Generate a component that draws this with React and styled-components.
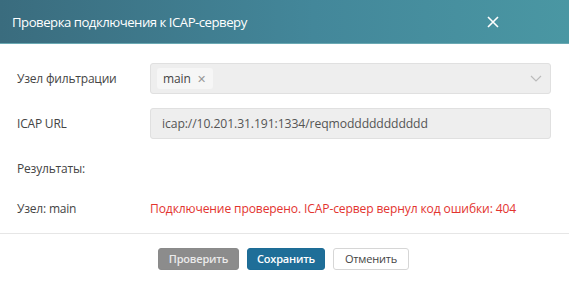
import React from "react";
import styled, { createGlobalStyle } from "styled-components";

const GlobalStyle = createGlobalStyle`
  html, body {
    margin: 0;
    padding: 0;
    background: #fff;
  }
  body {
    font-family: "Open Sans", "Noto Sans", sans-serif;
    color: #444;
  }
`;

const Dialog = styled.div`
  width: 569px;
  height: 283px;
  background: #fff;
  display: flex;
  flex-direction: column;
  overflow: hidden;
`;

const Header = styled.div`
  height: 44px;
  flex: none;
  display: flex;
  align-items: center;
  justify-content: space-between;
  padding: 0 12px 0 12px;
  background: linear-gradient(90deg, #3a6c7e 0%, #43879a 55%, #4a97a3 100%);
  border-bottom: 1px solid #6aa9b3;
  box-sizing: border-box;
`;

const Title = styled.div`
  color: #fff;
  font-size: 13.2px;
  letter-spacing: -0.5px;
`;

const Close = styled.div`
  width: 24px;
  display: flex;
  justify-content: center;
  margin-right: 52px;
`;

const Body = styled.div`
  flex: 1;
  padding: 19px 18px 0 17px;
  display: flex;
  flex-direction: column;
`;

const Row = styled.div`
  display: flex;
  align-items: center;
  height: ${(p) => p.h || 31}px;
  margin-bottom: ${(p) => p.mb || 0}px;
`;

const Label = styled.div`
  width: 133px;
  flex: none;
  font-size: 12px;
  color: #444;
  letter-spacing: -0.2px;
`;

const Field = styled.div`
  flex: 1;
  height: 31px;
  box-sizing: border-box;
  background: #eeeeee;
  border: 1px solid #e0e0e0;
  border-radius: 3px;
  display: flex;
  align-items: center;
  padding: 0 ${(p) => (p.select ? 6 : 11)}px;
  font-size: 12.2px;
  color: #555;
  letter-spacing: -0.1px;
`;

const Tag = styled.div`
  height: 21px;
  box-sizing: border-box;
  background: #f6f6f6;
  border-radius: 3px;
  padding: 0 7px 0 6px;
  display: flex;
  align-items: center;
  gap: 6px;
  font-size: 12px;
  color: #444;
`;

const TagX = styled.span`
  color: #999;
  font-size: 11px;
`;

const Chevron = styled.div`
  margin-left: auto;
  margin-right: 2px;
  display: flex;
`;

const ErrorText = styled.div`
  font-size: 12.1px;
  color: #e3342f;
  letter-spacing: -0.13px;
`;

const Footer = styled.div`
  border-top: 1px solid #e6e6e6;
  height: 50px;
  flex: none;
  display: flex;
  align-items: center;
  justify-content: center;
  gap: 8px;
  padding-right: 2px;
  box-sizing: border-box;
`;

const Button = styled.button`
  height: 22px;
  padding: 0;
  width: ${(p) => p.w}px;
  border-radius: 3px;
  font-family: "Open Sans", "Noto Sans", sans-serif;
  font-size: 11px;
  letter-spacing: -0.2px;
  cursor: pointer;
  border: 1px solid ${(p) => (p.kind === "primary" ? "#1d6c96" : p.kind === "gray" ? "#8a8a8a" : "#d6d6d6")};
  background: ${(p) => (p.kind === "primary" ? "#1f6e98" : p.kind === "gray" ? "#8c8c8c" : "#fff")};
  color: ${(p) => (p.kind === "cancel" ? "#444" : p.kind === "gray" ? "#eaeaea" : "#fff")};
  font-weight: ${(p) => (p.kind === "cancel" ? 400 : 600)};
`;

export default function App() {
  return (
    <>
      <GlobalStyle />
      <Dialog>
        <Header>
          <Title>Проверка подключения к ICAP-серверу</Title>
          <Close>
            <svg width="12" height="12" viewBox="0 0 12 12">
              <path d="M1 1 L11 11 M11 1 L1 11" stroke="#fff" strokeWidth="1.6" />
            </svg>
          </Close>
        </Header>
        <Body>
          <Row mb={14}>
            <Label>Узел фильтрации</Label>
            <Field select>
              <Tag>
                main <TagX>✕</TagX>
              </Tag>
              <Chevron>
                <svg width="12" height="8" viewBox="0 0 12 8">
                  <path d="M1 1 L6 6 L11 1" stroke="#bbb" strokeWidth="1.2" fill="none" />
                </svg>
              </Chevron>
            </Field>
          </Row>
          <Row mb={14}>
            <Label>ICAP URL</Label>
            <Field>icap://10.201.31.191:1334/reqmoddddddddddd</Field>
          </Row>
          <Row h={30} mb={10}>
            <Label>Результаты:</Label>
          </Row>
          <Row h={30}>
            <Label>Узел: main</Label>
            <ErrorText>Подключение проверено. ICAP-сервер вернул код ошибки: 404</ErrorText>
          </Row>
        </Body>
        <Footer>
          <Button kind="gray" w={81}>Проверить</Button>
          <Button kind="primary" w={78}>Сохранить</Button>
          <Button kind="cancel" w={76}>Отменить</Button>
        </Footer>
      </Dialog>
    </>
  );
}
